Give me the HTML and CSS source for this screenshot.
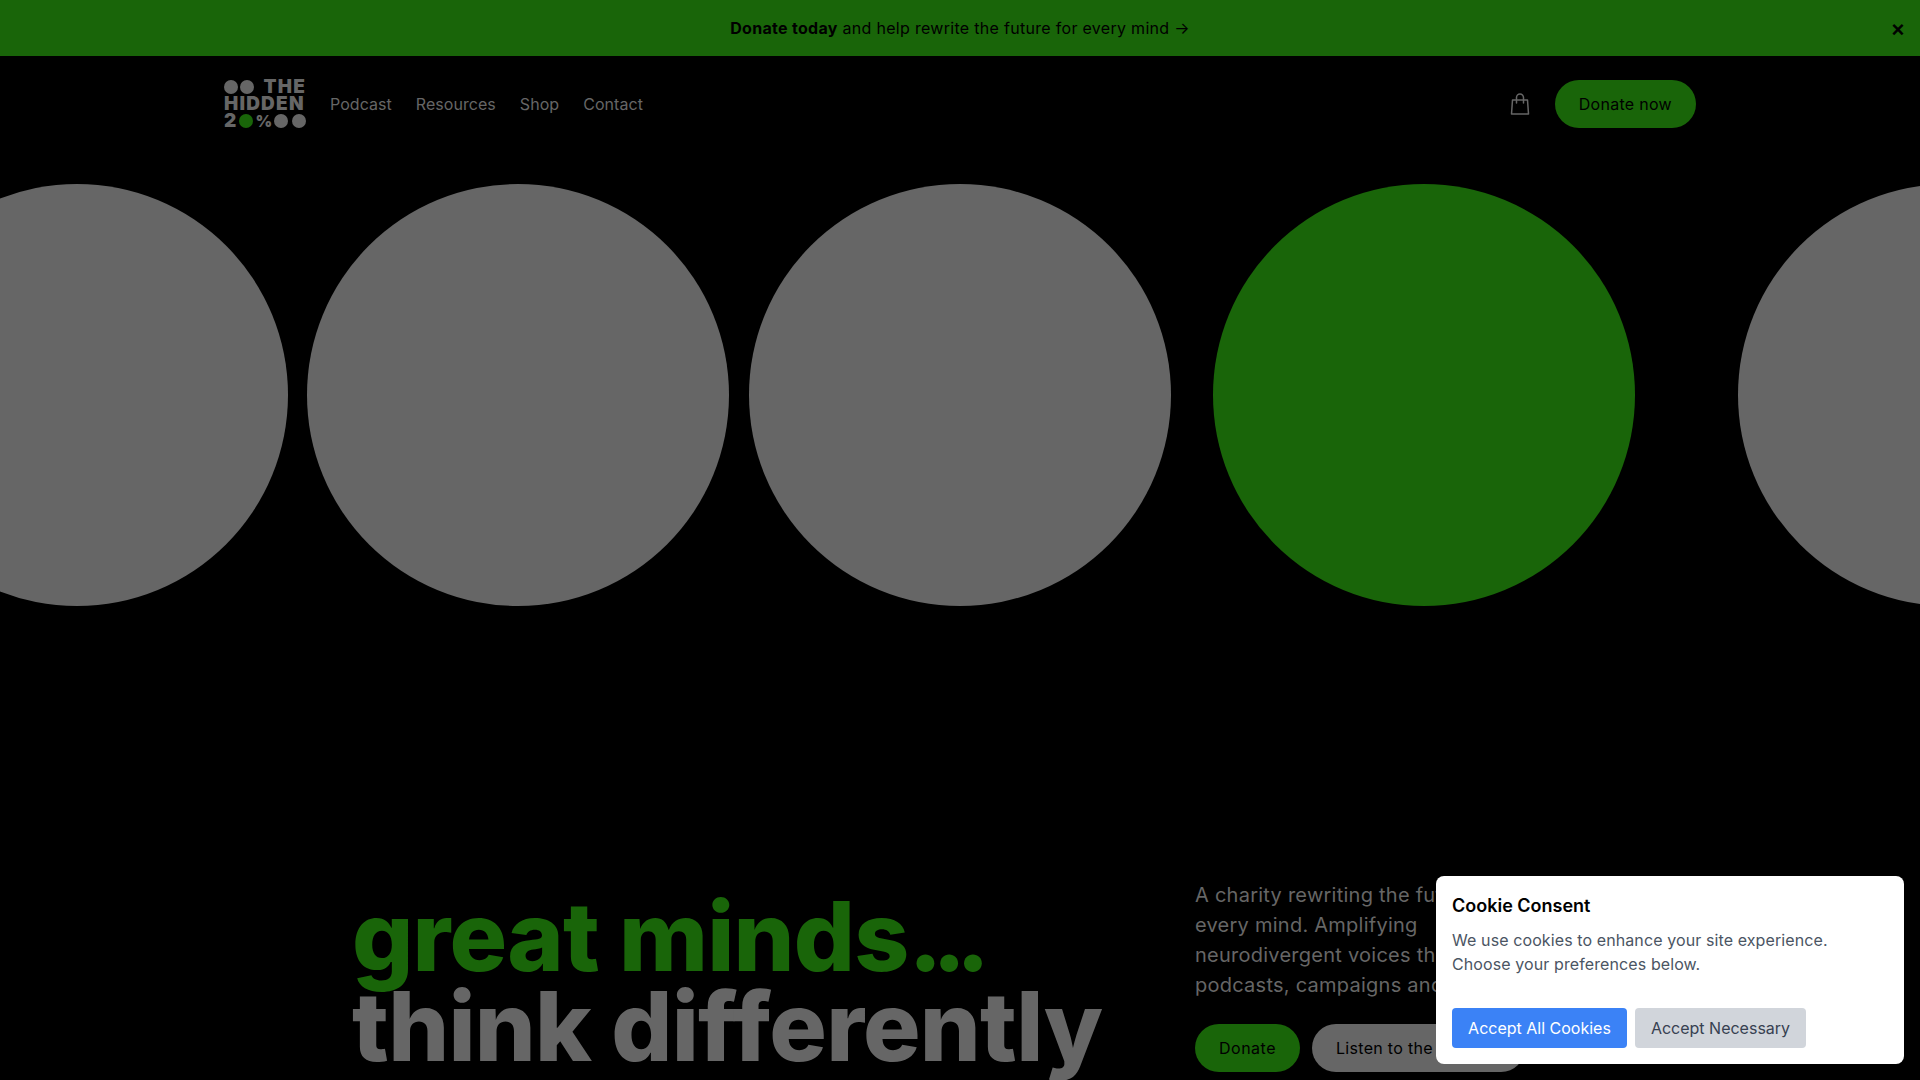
FILE: index.html
```html
<!DOCTYPE html>
<html lang="en">
<head>
    <meta charset="UTF-8">
    <meta name="viewport" content="width=device-width, initial-scale=1.0">
    <title>The Hidden 20%</title>
    <link rel="stylesheet" href="styles.css">
</head>
<body>
    <div class="announce">
        <p><strong>Donate today</strong> and help rewrite the future for every mind →</p>
        <button class="announce-close">×</button>
    </div>

    <header class="site-header">
        <a class="logo" href="#">
            <span class="logo-row">
                <i class="dot"></i><i class="dot"></i><span class="logo-word logo-the">THE</span>
            </span>
            <span class="logo-row"><span class="logo-word">HIDDEN</span></span>
            <span class="logo-row">
                <span class="logo-word">2</span><i class="dot dot-green"></i><span class="logo-word logo-pct">%</span><i class="dot"></i><i class="dot"></i>
            </span>
        </a>
        <nav class="main-nav">
            <a href="#">Podcast</a>
            <a href="#">Resources</a>
            <a href="#">Shop</a>
            <a href="#">Contact</a>
        </nav>
        <div class="header-actions">
            <svg class="bag" width="24" height="24" viewBox="0 0 24 24" fill="none" stroke="#666" stroke-width="1.5" stroke-linejoin="round" stroke-linecap="round">
                <path d="M4.5 8h15l1 14H3.500z"/>
                <path d="M8.500 11V5.500a3.500 3.500 0 0 1 7 0V11"/>
            </svg>
            <a class="btn btn-green" href="#">Donate now</a>
        </div>
    </header>

    <section class="circles">
        <div class="circle"></div>
        <div class="circle"></div>
        <div class="circle"></div>
        <div class="circle circle-green"></div>
        <div class="circle"></div>
    </section>

    <section class="hero">
        <h1><span class="hero-green">great minds<span class="hero-dots">...</span></span><br>think differently</h1>
        <div class="hero-side">
            <p>A charity rewriting the future for<br>every mind. Amplifying<br>neurodivergent voices through<br>podcasts, campaigns and events.</p>
            <div class="hero-btns">
                <a class="btn btn-green" href="#">Donate</a>
                <a class="btn btn-grey" href="#">Listen to the podcast</a>
            </div>
        </div>
    </section>

    <div class="cookie">
        <h3>Cookie Consent</h3>
        <p>We use cookies to enhance your site experience. Choose your preferences below.</p>
        <div class="cookie-btns">
            <button class="cookie-all">Accept All Cookies</button>
            <button class="cookie-necessary">Accept Necessary</button>
        </div>
    </div>
</body>
</html>
```

FILE: styles.css
```css
* {
    box-sizing: border-box;
}
html, body {
    height: 1080px;
    overflow: hidden;
}
body {
    margin: 0;
    background-color: #000;
    color: #666;
    font-family: Inter, Lato, sans-serif;
}
a {
    color: inherit;
    text-decoration: none;
}
.announce {
    position: relative;
    height: 56px;
    background-color: #196509;
    color: #000;
    display: flex;
    align-items: center;
    justify-content: center;
    font-size: 16px;
    letter-spacing: 0.3px;
}
.announce p {
    margin: 0;
}
.announce strong {
    font-weight: 700;
}
.announce-close {
    position: absolute;
    right: 14px;
    top: 19px;
    width: 16px;
    height: 22px;
    padding: 0;
    border: none;
    background: none;
    color: #000;
    font-size: 22px;
    font-weight: bold;
    line-height: 22px;
}
.site-header {
    display: flex;
    align-items: center;
    height: 96px;
    padding: 0 224px;
}
.logo {
    display: flex;
    flex-direction: column;
    gap: 3px;
    width: 82px;
    margin-right: 24px;
    font-weight: 900;
    font-size: 19px;
    line-height: 14px;
}
.logo-row {
    display: flex;
    align-items: center;
    justify-content: space-between;
    height: 14px;
}
.logo-word {
    letter-spacing: 1.2px;
}
.logo-the {
    margin-left: auto;
}
.logo-row .dot + .dot {
    margin-left: 2px;
}
.logo-pct {
    font-size: 16px;
    letter-spacing: 0;
}
.dot {
    display: block;
    width: 14px;
    height: 14px;
    border-radius: 50%;
    background-color: #666;
}
.dot-green {
    background-color: #196509;
}
.main-nav {
    display: flex;
    gap: 24px;
    font-size: 16px;
    letter-spacing: 0.05px;
}
.header-actions {
    margin-left: auto;
    display: flex;
    align-items: center;
    gap: 23px;
}
.btn {
    display: inline-flex;
    align-items: center;
    height: 48px;
    padding: 0 24px;
    border-radius: 24px;
    color: #000;
    font-size: 16px;
    letter-spacing: 0.3px;
}
.btn-green {
    background-color: #196509;
}
.btn-grey {
    background-color: #666;
}
.hero-btns .btn-green {
    letter-spacing: 0.5px;
}
.circles {
    display: flex;
    gap: 20px;
    height: 422px;
    margin-top: 32px;
    margin-left: -134px;
}
.circle {
    flex: none;
    width: 422px;
    height: 422px;
    border-radius: 50%;
    background-color: #666;
}
.circle:first-child {
    margin-right: -1px;
}
.circle-green {
    background-color: #196509;
    margin-left: 22px;
    margin-right: 83px;
}
.hero {
    display: flex;
    margin-top: 273px;
    padding-left: 352px;
}
.hero h1 {
    width: 843px;
    margin: 12px 0 0;
    font-size: 96px;
    font-weight: 800;
    line-height: 90px;
    letter-spacing: -0.8px;
    white-space: nowrap;
}
.hero-green {
    color: #196509;
}
.hero-dots {
    letter-spacing: -10px;
}
.hero-side {
    flex: none;
    width: 420px;
    padding-top: 1px;
}
.hero-side p {
    margin: 0 0 24px;
    font-size: 20px;
    line-height: 30px;
    letter-spacing: 0.25px;
}
.hero-btns {
    display: flex;
    gap: 12px;
}
.cookie {
    position: absolute;
    right: 16px;
    bottom: 16px;
    width: 468px;
    height: 188px;
    padding: 16px;
    background-color: #fff;
    border-radius: 8px;
}
.cookie h3 {
    margin: 0 0 8px;
    color: #000;
    font-size: 18px;
    line-height: 28px;
    font-weight: 600;
}
.cookie p {
    margin: 0 0 32px;
    width: 400px;
    color: #4b5563;
    font-size: 16px;
    line-height: 24px;
    letter-spacing: 0.1px;
}
.cookie-btns {
    display: flex;
    gap: 8px;
}
.cookie-btns button {
    height: 40px;
    padding: 0;
    border: none;
    border-radius: 4px;
    font-family: inherit;
    font-size: 16px;
}
.cookie-all {
    width: 175px;
    background-color: #3b82f6;
    color: #fff;
}
.cookie-necessary {
    width: 171px;
    background-color: #d1d5db;
    color: #374151;
}
```
